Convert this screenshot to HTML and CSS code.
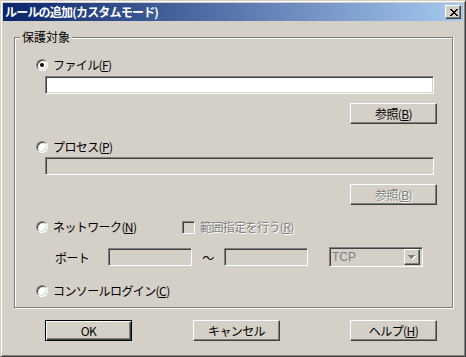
FILE: index.html
```html
<!DOCTYPE html>
<html lang="ja">
<head>
  <meta charset="UTF-8" />
  <title>ルールの追加(カスタムモード)</title>
  <link rel="stylesheet" href="styles.css">
</head>
<body>
  <div class="window">
    <div class="titlebar">
      <span class="title">ルールの追加(カスタムモード)</span>
      <div class="close">
        <svg width="8" height="7" viewBox="0 0 8 7" shape-rendering="crispEdges">
          <path fill="#000" d="M0 0h2v1H0zM6 0h2v1H6zM1 1h2v1H1zM5 1h2v1H5zM2 2h4v1H2zM3 3h2v1H3zM2 4h4v1H2zM1 5h2v1H1zM5 5h2v1H5zM0 6h2v1H0zM6 6h2v1H6z"/>
        </svg>
      </div>
    </div>

    <div class="group">
      <span class="group-label">保護対象</span>

      <div class="radio-row first">
        <span class="radio checked"><span class="dot"></span></span>
        <span>ファイル(<u>F</u>)</span>
      </div>
      <div class="textbox path"></div>
      <div class="btn-row">
        <div class="btn">参照(<u>B</u>)</div>
      </div>

      <div class="radio-row process">
        <span class="radio"></span>
        <span>プロセス(<u>P</u>)</span>
      </div>
      <div class="textbox path disabled"></div>
      <div class="btn-row">
        <div class="btn off">参照(<u>B</u>)</div>
      </div>

      <div class="radio-row network">
        <span class="radio-part">
          <span class="radio"></span>
          <span>ネットワーク(<u>N</u>)</span>
        </span>
        <span class="checkbox"></span>
        <span class="off">範囲指定を行う(<u>R</u>)</span>
      </div>
      <div class="port-row">
        <span class="port-label">ポート</span>
        <div class="textbox port disabled"></div>
        <span class="tilde">〜</span>
        <div class="textbox port disabled"></div>
        <div class="combo">
          <span class="combo-text">TCP</span>
          <span class="combo-arrow">
            <svg width="8" height="5" viewBox="0 0 8 5" shape-rendering="crispEdges">
              <path fill="#fff" transform="translate(1 1)" d="M0 0h7v1H0zM1 1h5v1H1zM2 2h3v1H2zM3 3h1v1H3z"/>
              <path fill="#808080" d="M0 0h7v1H0zM1 1h5v1H1zM2 2h3v1H2zM3 3h1v1H3z"/>
            </svg>
          </span>
        </div>
      </div>

      <div class="radio-row console">
        <span class="radio"></span>
        <span>コンソールログイン(<u>C</u>)</span>
      </div>
    </div>

    <div class="actions">
      <div class="btn default">OK</div>
      <div class="btn cancel">キャンセル</div>
      <div class="btn help">ヘルプ(<u>H</u>)</div>
    </div>
  </div>
</body>
</html>
```

FILE: styles.css
```css
body {
  margin: 0;
  background-color: #d4d0c8;
  font-family: "Noto Sans CJK JP", sans-serif;
  font-size: 12px;
  letter-spacing: -0.6px;
  color: #000;
}

.window {
  width: 466px;
  height: 357px;
  box-sizing: border-box;
  border: 1px solid;
  border-color: #d4d0c8 #404040 #404040 #d4d0c8;
  box-shadow: inset 1px 1px #fff, inset -1px -1px #808080;
  padding: 2px;
  background-color: #d4d0c8;
}

.titlebar {
  height: 18px;
  display: flex;
  align-items: center;
  padding-left: 2px;
  background: linear-gradient(to right, #0a246a, #a6caf0);
}

.title {
  flex: 1;
  color: #fff;
  font-weight: bold;
  line-height: 18px;
  letter-spacing: -0.8px;
}

.close {
  width: 16px;
  height: 14px;
  box-sizing: border-box;
  margin-right: 2px;
  border: 1px solid;
  border-color: #fff #404040 #404040 #fff;
  box-shadow: inset -1px -1px #808080;
  background-color: #d4d0c8;
  display: flex;
  align-items: center;
  justify-content: center;
}

.close svg {
  margin-left: 1px;
}

/* group box */
.group {
  position: relative;
  margin: 16px 10px 0 11px;
  padding: 21px 15px 10px 21px;
  border: 1px solid #808080;
  box-shadow: inset 1px 1px #fff, 1px 1px #fff;
}

.group-label {
  position: absolute;
  top: -8px;
  left: 5px;
  padding: 0 2px;
  line-height: 14px;
  letter-spacing: 0;
  background-color: #d4d0c8;
}

.radio-row {
  display: flex;
  align-items: center;
  height: 12px;
  line-height: 14px;
}

.radio-row.process {
  margin-top: 17px;
}

.radio-row.network {
  margin-top: 16px;
}

.radio-row.console {
  margin-top: 18px;
}

.radio-part {
  display: flex;
  align-items: center;
  width: 146px;
  flex: none;
}

.radio {
  width: 12px;
  height: 12px;
  flex: none;
  box-sizing: border-box;
  margin-right: 5px;
  border-radius: 50%;
  border: 1px solid;
  border-color: #808080 #fff #fff #808080;
  box-shadow: inset 1px 1px #404040, inset -1px -1px #d4d0c8;
  background-color: #fff;
  display: flex;
  align-items: center;
  justify-content: center;
}

.radio .dot {
  width: 4px;
  height: 4px;
  border-radius: 50%;
  background-color: #000;
}

.checkbox {
  width: 13px;
  height: 13px;
  flex: none;
  box-sizing: border-box;
  margin-right: 5px;
  border: 1px solid;
  border-color: #808080 #fff #fff #808080;
  box-shadow: inset 1px 1px #404040, inset -1px -1px #d4d0c8;
  background-color: #d4d0c8;
}

.textbox {
  height: 18px;
  box-sizing: border-box;
  border: 1px solid;
  border-color: #808080 #fff #fff #808080;
  box-shadow: inset 1px 1px #404040, inset -1px -1px #d4d0c8;
  background-color: #fff;
}

.textbox.disabled {
  background-color: #d4d0c8;
}

.textbox.path {
  width: 389px;
  margin-left: 9px;
  margin-top: 5px;
}

.process + .textbox.path {
  margin-top: 4px;
}

.btn-row {
  display: flex;
  justify-content: flex-end;
  margin-top: 9px;
}

.btn {
  width: 87px;
  height: 21px;
  box-sizing: border-box;
  border: 1px solid;
  border-color: #fff #404040 #404040 #fff;
  box-shadow: inset -1px -1px #808080;
  display: flex;
  align-items: center;
  justify-content: center;
  line-height: 14px;
}

.btn.default {
  border-color: #000;
  box-shadow: inset 1px 1px #fff, inset -1px -1px #404040, inset -2px -2px #808080;
}

.off {
  color: #808080;
  text-shadow: 1px 1px 0 #fff;
}

/* port row */
.port-row {
  display: flex;
  align-items: center;
  height: 20px;
  margin-top: 14px;
  padding-left: 19px;
}

.port-label {
  width: 53px;
  flex: none;
}

.textbox.port {
  width: 84px;
  flex: none;
}

.tilde {
  width: 32px;
  text-align: center;
}

.combo {
  width: 94px;
  height: 20px;
  box-sizing: border-box;
  margin-left: 21px;
  border: 1px solid;
  border-color: #808080 #fff #fff #808080;
  box-shadow: inset 1px 1px #404040, inset -1px -1px #d4d0c8;
  display: flex;
  align-items: center;
  padding: 2px 2px 2px 2px;
}

.combo-text {
  flex: 1;
  color: #808080;
  font-family: "Liberation Sans", sans-serif;
  letter-spacing: 0;
}

.combo-arrow {
  width: 16px;
  height: 16px;
  box-sizing: border-box;
  border: 1px solid;
  border-color: #fff #404040 #404040 #fff;
  box-shadow: inset -1px -1px #808080;
  display: flex;
  align-items: center;
  justify-content: center;
}

/* dialog buttons */
.actions {
  display: flex;
  margin-top: 12px;
  padding-left: 42px;
}

.btn.cancel {
  margin-left: 61px;
}

.btn.help {
  margin-left: 70px;
}
```
